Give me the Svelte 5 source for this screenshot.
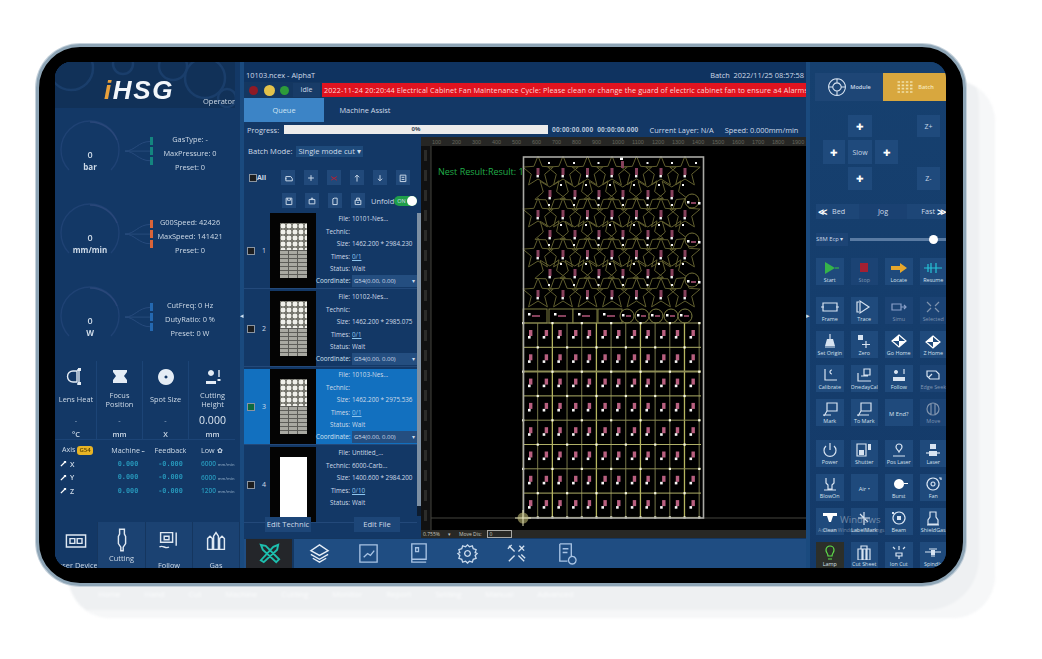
<script>
  const gauges = [
    { v: '0', u: 'bar', c: '#14857f', lines: ['GasType: -', 'MaxPressure: 0', 'Preset: 0'] },
    { v: '0', u: 'mm/min', c: '#d8643a', lines: ['G00Speed: 42426', 'MaxSpeed: 141421', 'Preset: 0'] },
    { v: '0', u: 'W', c: '#2468b0', lines: ['CutFreq: 0 Hz', 'DutyRatio: 0 %', 'Preset: 0 W'] }
  ];
  const sensors = [
    { l: ['Lens Heat'], v: '-', u: '°C', i: 'M11 4H7a5.500 5.500 0 0 0 0 11h4zM13 2v15M11 3h4M11 17h4', f: 'M12 1h3v3h-3zM12 15h3v3h-3z' },
    { l: ['Focus', 'Position'], v: '-', u: 'mm', i: '', f: 'M3 3h14v2l-3 4 3 4v3H3v-3l3-4-3-4z' },
    { l: ['Spot Size'], v: '-', u: 'X', i: '', f: 'M10 2a8 8 0 1 0 .01 0zM10 8.500a1.500 1.500 0 1 1-.01 0z' },
    { l: ['Cutting', 'Height'], v: '0.000', u: 'mm', i: 'M16 3v7', f: 'M8 3a3 3 0 1 1-.01 0zM14.500 12h3v2h-3zM3 14h10v3H3z' }
  ];
  const axes = [
    { a: 'X', m: '0.000', f: '-0.000', l: '6000' },
    { a: 'Y', m: '0.000', f: '-0.000', l: '6000' },
    { a: 'Z', m: '0.000', f: '-0.000', l: '1200' }
  ];
  const tiles = [
    { l: 'Laser Device', cls: 'left', d: 'M2 5h16v10H2zM5 8h4v4H5zM11 8h4v4h-4z' },
    { l: 'Cutting', cls: 'two', d: 'M8 1h4v4l1 2v6l-2 3v3H9v-3l-2-3V7l1-2z' },
    { l: 'Follow', cls: '', d: 'M3 3h10v8H3zM6 6h4v3H6zM16 3v11M2 15c3-2 5 2 8 0' },
    { l: 'Gas', cls: '', d: 'M3 8l2-2 2 2v9H3zM8 6l2-3 2 3v11H8zM13 8l2-2 2 2v9h-4z' }
  ];
  const tools1 = ['M4 5h7l2 3v3H4zM3 8h2', 'M7 3v8M3 7h8', 'M3 5l8 5M11 5l-8 5', 'M7 12V3M4 6l3-3 3 3', 'M7 3v7M4 8l3 3 3-3', 'M3 3h8v9H3zM5 6h4M5 9h4'];
  const tools2 = ['M3 3h8v9H3zM5 3v3h4V3', 'M3 5h8v6H3zM6 5V3h2v2', 'M4 4l2-1h4v9H4z', 'M3 6h8v6H3zM5 6V3h4v3M6 9h2'];
  const queue = [
    { n: 1, f: '10101-Nes...', t: '', s: '1462.200 * 2984.230', m: '0/1', st: 'Wait', coord: true, on: false },
    { n: 2, f: '10102-Nes...', t: '', s: '1462.200 * 2985.075', m: '0/1', st: 'Wait', coord: true, on: false },
    { n: 3, f: '10103-Nes...', t: '', s: '1462.200 * 2975.536', m: '0/1', st: 'Wait', coord: true, on: true },
    { n: 4, f: 'Untitled_...', t: '6000-Carb...', s: '1400.600 * 2984.200', m: '0/10', st: 'Wait', coord: false, on: false, blank: true }
  ];

  const starPts = (cx, cy, R, r, rot = 0) => {
    const p = [];
    for (let i = 0; i < 10; i++) {
      const a = -Math.PI / 2 + rot + (i * Math.PI) / 5;
      const q = i % 2 ? r : R;
      p.push(`${(cx + q * Math.cos(a)).toFixed(1)},${(cy + q * Math.sin(a)).toFixed(1)}`);
    }
    return p.join(' ');
  };
  const xA = [538, 563, 587.5, 612, 636.5, 661, 685];
  const xB = [550, 575, 599, 623, 648, 672];
  const starRows = [
    { y: 172, xs: xA, rot: 0 }, { y: 194, xs: xB, rot: 0.6 },
    { y: 214, xs: xA, rot: 0 }, { y: 234, xs: xB, rot: 0.6 },
    { y: 254, xs: xA, rot: 0 }, { y: 273, xs: xB, rot: 0.6 },
    { y: 294, xs: xA, rot: 0 }
  ];
  const gridX = Array.from({ length: 13 }, (_, i) => 523 + i * 14.68);
  const gridY = Array.from({ length: 9 }, (_, i) => 323 + i * 24.3);
  const rulerX = Array.from({ length: 19 }, (_, i) => ({ x: 432 + i * 20, t: String((i + 1) * 100) }));
  const rulerY = Array.from({ length: 19 }, (_, i) => 150 + i * 20);

  const S = '#d7e3f1';
  const grp1 = [
    [
      { l: 'Start', d: 'M15 8h4', f: 'M5 2l10 6-10 6z', c: '#35b34a' },
      { l: 'Stop', f: 'M6 3h8v9H6z', c: '#a32033', dim: true },
      { l: 'Locate', f: 'M2 6h9V3l7 5-7 5v-3H2z', c: '#e6a72c' },
      { l: 'Resume', d: 'M1 8h18M5 4v8M8 3v10M13 3v10', c: '#26c3d8' }
    ],
    [
      { l: 'Frame', d: 'M3 4h14v8H3zM1 8h3M16 8h3', c: S },
      { l: 'Trace', d: 'M6 2v12l9-6zM5 3H3v10h2', c: S },
      { l: 'Simu', d: 'M3 5h9v6H3zM12 8h5M15 6l2 2-2 2', c: '#8aa0c9', dim: true },
      { l: 'Selected', d: 'M4 3l4 4M16 3l-4 4M4 13l4-4M16 13l-4-4', c: '#7f93ad', dim: true }
    ]
  ];
  const grp2 = [
    [
      { l: 'Set Origin', d: 'M10 1v6M5 14h10', f: 'M7 6h6l2 7H5z', c: S },
      { l: 'Zero', d: 'M12 8v7M8 11.500h8', f: 'M4 2h5v5H4z', c: S },
      { l: 'Go Home', d: 'M10 2l7 6-7 6-7-6z', f: 'M10 2v6H3zM10 14V8h7z', c: '#fff' },
      { l: 'Z Home', d: 'M10 3l7 6-7 6-7-6z', f: 'M10 3v6H3zM10 15V9h7z', c: '#fff' }
    ],
    [
      { l: 'Calibrate', d: 'M5 2v11h12M12 3a2 2 0 1 0 0 4', c: S },
      { l: 'OnedayCal', d: 'M4 6v8h13M10 2h6v6h-6zM7 9h7', c: S },
      { l: 'Follow', d: 'M15 2v5', f: 'M4 10h12v4H4zM7 3a2 2 0 1 1-.01 0z', c: S },
      { l: 'Edge Seek', d: 'M4 4h9l3 3v5H7l-3-3zM9 7l-3 3', c: S, dim: true }
    ],
    [
      { l: 'Mark', d: 'M7 2h10v8H7zM7 10l-3 5M3 14h8', c: S },
      { l: 'To Mark', d: 'M7 2h10v8H7zM7 10l-3 5M3 14h12', c: S },
      { l: '', t: 'M End?', c: S },
      { l: 'Move', d: 'M4 8a4 4 0 0 1 12 0 4 4 0 0 1-12 0M8 2v12M12 2v12', c: '#7f93ad', dim: true }
    ]
  ];
  const grp3 = [
    [
      { l: 'Power', d: 'M6 4a6 6 0 1 0 8 0M10 1v7', c: S },
      { l: 'Shutter', d: 'M3 2h9v12H3z', f: 'M5 8h5v5H5zM14 2h3v6h-3z', c: S },
      { l: 'Pos Laser', d: 'M7 5a3 3 0 1 1 6 0c0 2-2 3-3 5-1-2-3-3-3-5M4 14h12', c: S },
      { l: 'Laser', d: 'M3 11h14', f: 'M7 2h6v5H7zM6 9h8v5H6z', c: S }
    ],
    [
      { l: 'BlowOn', d: 'M6 2v5l2 2v4h4V9l2-2V2M4 14h12', c: S },
      { l: '', t: 'Air •', c: S },
      { l: 'Burst', f: 'M10 3a5 5 0 1 0 .01 0zM15 7h4v1h-4z', c: '#fff' },
      { l: 'Fan', d: 'M10 2a6 6 0 1 0 .01 0zM10 6a2 2 0 1 0 .01 0zM16 2h2v2', c: S }
    ],
    [
      { l: 'Clean', f: 'M3 3h14v3H3zM7 6h6l-2 6H9z', c: '#fff' },
      { l: 'LabelMark', d: 'M10 2v13M4 8h12M6 4l8 8', c: S },
      { l: 'Beam', d: 'M10 2a6 6 0 1 0 .01 0z', f: 'M8 6h4v4H8zM3 2h2v2H3z', c: S },
      { l: 'ShieldGas', d: 'M7 2h6v5l2 3v4H5v-4l2-3zM4 15h12', c: S }
    ],
    [
      { l: 'Lamp', d: 'M6 6a4 4 0 1 1 8 0c0 3-2 3-2 6H8c0-3-2-3-2-6M8 15h4', c: '#5fe04a', lit: true },
      { l: 'Cut Sheet', d: 'M4 5h4v11H4zM9 5h3v11H9zM13 5h3v11h-3zM7 2h6v3H7z', c: S },
      { l: 'Ion Cut', d: 'M10 2v4M7 9h6v3H7zM10 12v3M4 3l2 2M16 3l-2 2', c: S },
      { l: 'Spindle', d: 'M2 8h16M6 5h8M8 12h4', f: 'M8 6h4v5H8z', c: S }
    ]
  ];
  const navIcons = [
    { d: 'M3 3l5 1 14 14-3 3L5 8zM21 3l-1 5L6 21l-3-2 13-14z', c: '#1dbfae' },
    { d: 'M12 3l9 6-9 5-9-5zM3 13l9 5 9-5M5 17l7 4 7-4', c: '#e6eef7' },
    { d: 'M3 3h18v18H3zM7 16l4-4 3 2 4-5', c: '#a9c4e4' },
    { d: 'M5 2h15v16H5zM5 18v3h15M9 6h3v4H9z', c: '#a9c4e4' },
    { d: 'M12 3l2 2 3-1 1 3 3 1-1 3 2 1-2 2 1 3-3 1-1 3-3-1-2 2-2-2-3 1-1-3-3-1 1-3-2-2 2-1-1-3 3-1 1-3 3 1zM12 9a3 3 0 1 0 .01 0z', c: '#c8d9ec' },
    { d: 'M4 4l6 6M7 3L3 7M14 10l6-6M20 9l-5-5M10 14l-6 6M14 14l6 6M17 13l4 4', c: '#d4e1ef' },
    { d: 'M5 2h12v13M5 2v18h8M8 7h6M8 11h5M18 15a4 4 0 1 0 .01 0z', c: '#a9c4e4' }
  ];
  const ghost = ['Home', 'Hand', 'Cut', 'Machine', 'Cutting', 'Monitor', 'Report', 'Setting', 'Manual', 'Advanced'];
</script>

{#snippet tool(b)}
  <div class="tool" class:lit={b.lit} class:dim={b.dim}>
    {#if b.t}
      <span class="tool-text">{b.t}</span>
    {:else}
      <svg viewBox="0 0 20 16" width="20" height="16" style="color:{b.c}">
        {#if b.f}<path d={b.f} fill="currentColor" />{/if}
        {#if b.d}<path d={b.d} fill="none" stroke="currentColor" stroke-width="1.2" />{/if}
      </svg>
      <span class="tool-label">{b.l}</span>
    {/if}
  </div>
{/snippet}

<div class="page">
  <div class="ghost">
    <div class="ghost-labels">
      {#each ghost as g}<span>{g}</span>{/each}
    </div>
  </div>

  <div class="tablet">
    <div class="screen">
      <!-- LEFT -->
      <aside class="left">
        <header class="brand">
          <svg class="cogs" viewBox="0 0 180 46" aria-hidden="true">
            <circle cx="16" cy="6" r="22" /><circle cx="68" cy="2" r="10" />
            <circle cx="150" cy="16" r="20" /><circle cx="118" cy="4" r="14" /><circle cx="172" cy="36" r="9" />
          </svg>
          <div class="logo"><span class="logo-i">i</span>HSG</div>
          <div class="operator">Operator</div>
        </header>

        {#each gauges as g}
          <section class="gauge-row">
            <div class="dial">
              <svg class="arc" viewBox="0 0 70 70" aria-hidden="true">
                <path d="M14 56a29 29 0 1 1 42 0" />
                <path class="arc-b" d="M35 8a29 29 0 0 1 27 18" />
              </svg>
              <div class="dial-v">{g.v}</div>
              <div class="dial-u">{g.u}</div>
            </div>
            <svg class="conn" viewBox="0 0 26 83" aria-hidden="true">
              <path d="M0 39c10 0 14-10 26-10M0 39h26M0 39c10 0 14 10 26 10" />
            </svg>
            <div class="ticks">
              {#each [0, 1, 2] as _}<i style="background:{g.c}"></i>{/each}
            </div>
            <div class="info">
              {#each g.lines as l}<div>{l}</div>{/each}
            </div>
          </section>
        {/each}

        <section class="sensors">
          {#each sensors as s}
            <div class="sensor">
              <svg viewBox="0 0 20 20" width="20" height="20">
                {#if s.f}<path d={s.f} fill="#e4ecf5" fill-rule="evenodd" />{/if}
                {#if s.i}<path d={s.i} fill="none" stroke="#e4ecf5" stroke-width="1.4" />{/if}
              </svg>
              <div class="sensor-l">{#each s.l as l}<div>{l}</div>{/each}</div>
              <div class="sensor-v" class:big={s.v !== '-'}>{s.v}</div>
              <div class="sensor-u">{s.u}</div>
            </div>
          {/each}
        </section>

        <section class="axes">
          <div class="axis-row head">
            <div class="c-a">Axis <b class="g54">G54</b></div>
            <div class="c-m">Machine <small>▪▪</small></div>
            <div class="c-f">Feedback</div>
            <div class="c-l">Low ✿</div>
          </div>
          {#each axes as a}
            <div class="axis-row">
              <div class="c-a ax"><svg viewBox="0 0 8 8" width="7" height="7"><path d="M1 7l5-5" stroke="#fff" stroke-width="1.5" /><path d="M4 1h3v3z" fill="#fff" /></svg> {a.a}</div>
              <div class="c-m cy">{a.m}</div>
              <div class="c-f cy">{a.f}</div>
              <div class="c-l cy2">{a.l} <small>mm/min</small></div>
            </div>
          {/each}
        </section>

        <section class="tiles">
          {#each tiles as t}
            <div class="tile {t.cls}">
              <svg viewBox="0 0 20 20" width="24" height="24"><path d={t.d} fill="none" stroke="#dfe8f2" stroke-width="1.2" /></svg>
              <span>{t.l}</span>
            </div>
          {/each}
        </section>
      </aside>

      <div class="gutter"><span>◂</span></div>

      <!-- MIDDLE -->
      <main class="mid">
        <div class="titlebar">
          <span>10103.ncex - AlphaT</span>
          <span>Batch&nbsp; 2022/11/25 08:57:58</span>
        </div>
        <div class="statusbar">
          <i class="dot red"></i><i class="dot yellow"></i><i class="dot green"></i>
          <span class="idle">Idle</span>
          <div class="alarm">
            <span>2022-11-24 20:20:44  Electrical Cabinet Fan Maintenance Cycle: Please clean or change the guard of electric cabinet fan to ensure a</span>
            <span>4 Alarms</span>
          </div>
        </div>
        <div class="tabs">
          <div class="tab active">Queue</div>
          <div class="tab">Machine Assist</div>
        </div>
        <div class="progress">
          <span class="p-label">Progress:</span>
          <div class="p-bar">0%</div>
          <span class="p-times">00:00:00.000&nbsp; 00:00:00.000</span>
          <span class="p-layer">Current Layer: N/A</span>
          <span class="p-speed">Speed: 0.000mm/min</span>
        </div>

        <div class="work">
          <div class="queue">
            <div class="batch"><span>Batch Mode:</span><span class="batch-sel">Single mode cut ▾</span></div>
            <div class="toolbar t1">
              <label class="all"><i class="chk"></i>All</label>
              {#each tools1 as d, i}
                <div class="tbtn" class:redb={i === 2}>
                  <svg viewBox="0 0 14 14" width="10" height="10"><path {d} fill="none" stroke={i === 2 ? '#b32136' : '#c6d5e6'} stroke-width="1.4" /></svg>
                </div>
              {/each}
            </div>
            <div class="toolbar t2">
              {#each tools2 as d}
                <div class="tbtn">
                  <svg viewBox="0 0 14 14" width="10" height="10"><path {d} fill="none" stroke="#c6d5e6" stroke-width="1.4" /></svg>
                </div>
              {/each}
              <span class="unfold">Unfold</span>
              <div class="toggle"><span>ON</span><i></i></div>
            </div>

            <div class="list">
              <div class="rows">
                {#each queue as q}
                  <div class="row" class:on={q.on}>
                    <div class="sel">
                      <i class="chk" class:chk-on={q.on}></i><span>{q.n}</span>
                    </div>
                    <div class="thumb" class:thumb-blank={q.blank}><div class="drawing"></div></div>
                    <div class="fields">
                      <div><span>File:</span><b>{q.f}</b></div>
                      <div><span>Technic:</span><b>{q.t}</b></div>
                      <div><span>Size:</span><b>{q.s}</b></div>
                      <div><span>Times:</span><b><u>{q.m}</u></b></div>
                      <div><span>Status:</span><b>{q.st}</b></div>
                      {#if q.coord}
                        <div class="coord"><span>Coordinate:</span><b>G54(0.00, 0.00) <em>▾</em></b></div>
                      {/if}
                    </div>
                  </div>
                {/each}
              </div>
              <div class="scroll"><i></i></div>
            </div>

            <div class="edits">
              <div class="edit">Edit Technic</div>
              <div class="edit">Edit File</div>
            </div>
          </div>

          <div class="canvas">
            <svg class="cad" viewBox="421 137 385 393" preserveAspectRatio="none" aria-hidden="true">
              <rect x="421" y="137" width="385" height="9" fill="#262624" />
              <rect x="421" y="146" width="10" height="384" fill="#111" />
              {#each rulerX as r}<text x={r.x} y="144" class="tick">{r.t}</text>{/each}
              {#each rulerY as y}<rect x="424" {y} width="3" height="11" fill="#2c2c2a" />{/each}
              <path d="M431 146v384M431 518h375" stroke="#44443f" stroke-width="1" fill="none" />

              {#each starRows as r}
                {#each r.xs as x}
                  <polygon points={starPts(x, r.y, 16, 7, r.rot)} fill="none" stroke="#5f5d2e" stroke-width="1" />
                  <rect x={x - 1.5} y={r.y - 4} width="3" height="7" fill="#86415c" />
                  <rect x={x - 1.5} y={r.y + 3} width="2.4" height="2.4" fill="#f4f4f4" />
                  <rect x={x + 10} y={r.y - 10} width="2" height="2" fill="#f4f4f4" />
                {/each}
              {/each}
              <rect x="620" y="157" width="3" height="3" fill="#fff" /><rect x="621" y="161" width="3" height="7" fill="#86415c" />
              {#each [201, 240, 280] as y}
                <circle cx="692" cy={y} r="7" fill="#000" stroke="#716f37" />
                <rect x="687" {y} width="2.5" height="2.5" fill="#fff" /><rect x="691" y={y + 1} width="5" height="2" fill="#86415c" />
                <rect x="698" y={y + 1} width="2.5" height="2.5" fill="#fff" />
              {/each}

              {#each [523, 549, 573, 598] as x}
                <rect {x} y="309" width="24" height="14" fill="#000" stroke="#7c7c40" />
                <rect x={x + 5} y="313" width="2.5" height="2.5" fill="#fff" /><rect x={x + 9} y="315" width="8" height="2" fill="#86415c" />
              {/each}
              {#each [627, 642, 656, 671, 685] as x}
                <circle cx={x} cy="316" r="7" fill="#000" stroke="#7c7c40" />
                <rect x={x - 5} y="314" width="2.5" height="2.5" fill="#fff" /><rect x={x - 1} y="315" width="5" height="2" fill="#86415c" />
              {/each}

              {#each gridX as x, i}
                <path d="M{x} 323V518" stroke={i % 3 === 2 ? '#b4b460' : '#77774a'} stroke-width={i % 3 === 2 ? 1.3 : 1} />
              {/each}
              {#each gridY as y, i}
                <path d="M523 {y}H701" stroke={i % 2 ? '#b0b068' : '#8d8d56'} stroke-width={i === 2 ? 2 : 1} />
              {/each}
              {#each gridY.slice(0, -1) as y}
                {#each gridX.slice(0, -1) as x, i}
                  <rect x={x + 6 + (i % 2)} y={y + 7} width="3.4" height="6" fill="#b85f7f" />
                  <rect x={x + 5} y={y + 13} width="2.6" height="2.6" fill="#f7f7f7" />
                {/each}
              {/each}
              {#each gridY as y, j}
                {#each gridX as x, i}
                  {#if (i + j) % 2 === 0 || j === 8}
                    <rect x={x - 1} y={y - 1} width="2.2" height="2.2" fill="#fbfbe6" />
                  {/if}
                {/each}
              {/each}

              <rect x="523.5" y="157" width="180" height="361" fill="none" stroke="#a8a8a4" stroke-width="1.6" />
              <circle cx="523" cy="518" r="5.5" fill="#8d8a56" opacity=".8" />
              <path d="M523 510v16M515 518h16" stroke="#e4e2b8" stroke-width="1" />
            </svg>
            <div class="nest">Nest Result:Result: 1</div>
            <div class="strip">
              <span>0.755%</span><span class="dd">▾</span><span>Move Dis:</span><span class="mv">0</span>
            </div>
          </div>
        </div>

        <nav class="nav">
          {#each navIcons as n, i}
            <div class="nav-item" class:cur={i === 0}>
              <svg viewBox="0 0 24 24" width="23" height="23"><path d={n.d} fill="none" stroke={n.c} stroke-width={i === 0 ? 2 : 1.4} /></svg>
            </div>
          {/each}
        </nav>
      </main>

      <div class="gutter"><span>▸</span></div>

      <!-- RIGHT -->
      <aside class="right">
        <div class="modes">
          <div class="mode">
            <svg viewBox="0 0 24 24" width="20" height="20"><path d="M12 2a10 10 0 1 0 .01 0zM12 7a5 5 0 1 0 .01 0zM12 2v5M2 12h5M17 12h5M12 17v5" fill="none" stroke="#d7e3f1" stroke-width="1.3" /></svg>
            <span>Module</span>
          </div>
          <div class="mode gold">
            <svg viewBox="0 0 24 16" width="20" height="14"><path d="M3 2h18M3 6h18M3 10h18M3 14h18" stroke="#efe0a6" stroke-width="2" stroke-dasharray="3 2" /></svg>
            <span>Batch</span>
          </div>
        </div>

        <div class="pad">
          <div class="pb up">✚</div>
          <div class="pb zp">Z+</div>
          <div class="pb lf">✚</div>
          <div class="pb ct">Slow</div>
          <div class="pb rt">✚</div>
          <div class="pb dn">✚</div>
          <div class="pb zm">Z-</div>
        </div>

        <div class="jog">
          <div class="jog-s"><b>≪</b><span>Bed</span></div>
          <div class="jog-m">Jog</div>
          <div class="jog-s end"><span>Fast</span><b>≫</b></div>
        </div>

        <div class="speed">
          <span class="sel-s">S8M Ecp ▾</span>
          <div class="track"><i></i></div>
        </div>

        <div class="toolgrid first">
          {#each grp1 as r}{#each r as b}{@render tool(b)}{/each}{/each}
        </div>
        <div class="toolgrid second">
          {#each grp2 as r}{#each r as b}{@render tool(b)}{/each}{/each}
        </div>
        <div class="toolgrid third">
          {#each grp3 as r}{#each r as b}{@render tool(b)}{/each}{/each}
        </div>
        <div class="winmark"><div>Windows</div><small>Activate Windows in Settings</small></div>
      </aside>
    </div>
  </div>
</div>

<style>
  :global(body) { margin: 0; background: #fff; }
  .page {
    position: relative;
    width: 1042px;
    height: 659px;
    box-sizing: border-box;
    padding: 44px 0 0 36px;
    overflow: hidden;
    background: #fff;
    font-family: "Open Sans", "Liberation Sans", sans-serif;
    color: #cfdbe8;
  }
  .ghost {
    position: absolute;
    left: 68px;
    top: 80px;
    width: 927px;
    height: 538px;
    box-sizing: border-box;
    border-radius: 42px;
    background: #eef0f2;
    box-shadow: inset -26px -18px 0 -10px #f6f7f8;
    filter: blur(1px);
  }
  .ghost-labels {
    position: absolute;
    left: 30px;
    right: 0;
    top: 508px;
    display: flex;
    gap: 24px;
    font-size: 8px;
    color: #fbfcfd;
  }
  .tablet {
    position: relative;
    width: 930px;
    height: 542px;
    box-sizing: border-box;
    padding: 15px 16px;
    border: 3px solid #8ea5b6;
    border-radius: 44px;
    background: #000;
    box-shadow: 0 0 0 1px #c6d2dc;
  }
  .screen {
    width: 891px;
    height: 506px;
    display: grid;
    grid-template-columns: 185px 4px 562px 4px 136px;
    overflow: hidden;
    border-radius: 16px;
    background: #123563;
    filter: blur(.6px);
  }
  .gutter {
    background: #1a4a7e;
    display: flex;
    align-items: center;
    justify-content: center;
    font-size: 7px;
    color: #cfe0f0;
    overflow: hidden;
  }

  /* left */
  .left {
    display: flex;
    flex-direction: column;
    background: #133866;
    min-width: 0;
    overflow: hidden;
  }
  .brand {
    position: relative;
    height: 46px;
    width: 180px;
    flex: none;
    background: #113158;
  }
  .cogs { position: absolute; inset: 0; width: 100%; height: 100%; }
  .cogs circle { fill: none; stroke: #1a3e6b; stroke-width: 2.5; }
  .logo {
    position: absolute;
    left: 49px;
    top: 14px;
    font: italic 900 26px/28px "Liberation Sans", sans-serif;
    letter-spacing: 1.6px;
    color: #f3f7fb;
  }
  .logo-i { color: #e9a13c; }
  .operator {
    position: absolute;
    left: 148px;
    top: 34px;
    font-size: 7.5px;
    white-space: nowrap;
  }
  .gauge-row {
    height: 83px;
    flex: none;
    display: grid;
    grid-template-columns: 70px 25px 4px 72px;
  }
  .gauge-row:first-of-type { margin-top: 4px; }
  .dial { position: relative; text-align: center; font-weight: 600; }
  .arc { position: absolute; left: 0; top: 2px; width: 70px; height: 70px; }
  .arc path { fill: none; stroke: #1f4274; stroke-width: 1.4; }
  .arc .arc-b { stroke: #2a4779; }
  .dial-v { position: relative; padding-top: 36px; font-size: 9px; line-height: 13px; }
  .dial-u { position: relative; font-size: 8px; line-height: 12px; font-weight: 700; }
  .conn { width: 25px; height: 83px; }
  .conn path { fill: none; stroke: #284b7d; stroke-width: 1; }
  .ticks { padding-top: 25px; display: flex; flex-direction: column; gap: 2px; }
  .ticks i { display: block; height: 8px; width: 3px; }
  .info { padding-top: 20px; font-size: 7.4px; line-height: 14px; text-align: center; white-space: nowrap; }
  .sensors {
    display: grid;
    grid-template-columns: 41px 46px 46px 47px;
    width: 180px;
    padding-left: 1px;
    height: 79px;
    flex: none;
    border-bottom: 1px solid #1c4476;
    box-sizing: border-box;
  }
  .sensor {
    display: flex;
    flex-direction: column;
    align-items: center;
    border-right: 1px solid #1c4476;
    padding-top: 6px;
    font-size: 7.4px;
    line-height: 9.5px;
    text-align: center;
    white-space: nowrap;
  }
  .sensor:last-child { border-right: 0; }
  .sensor svg { flex: none; }
  .sensor-l { height: 22px; margin-top: 2px; display: flex; flex-direction: column; justify-content: center; }
  .sensor-v { height: 18px; line-height: 18px; color: #9fb4cc; }
  .sensor-v.big { font-size: 10.5px; color: #dbe5f0; }
  .sensor-u { margin-top: 1px; font-weight: 600; }
  .axes { height: 82px; flex: none; padding-top: 2px; box-sizing: border-box; }
  .axis-row {
    display: grid;
    grid-template-columns: 47px 44px 41px 44px;
    height: 13.5px;
    align-items: center;
    padding-left: 4px;
    font-size: 7.2px;
    white-space: nowrap;
  }
  .axis-row.head { height: 15px; }
  .axis-row small { font-size: 4px; }
  .c-a { padding-left: 3px; }
  .c-m, .c-f { text-align: center; }
  .c-l { padding-left: 10px; }
  .ax { font-weight: 600; padding-left: 1px; display: flex; align-items: center; gap: 3px; }
  .g54 { display: inline-block; background: #e8b425; color: #5c4400; border-radius: 3px; padding: 0 2px; font-size: 6px; line-height: 9px; font-weight: 600; }
  .cy { color: #2796ba; font-family: "DejaVu Sans Mono", monospace; font-size: 6.8px; font-weight: 700; }
  .cy2 { color: #2796ba; font-size: 6.6px; font-weight: 600; }
  .cy2 small { color: #7f9cb9; }
  .tiles {
    flex: 1;
    min-height: 0;
    display: grid;
    grid-template-columns: 43px 48px 47px 47px;
    background: #1b4272;
    overflow: hidden;
  }
  .tile {
    display: flex;
    flex-direction: column;
    align-items: center;
    padding-top: 7px;
    gap: 8px;
    font-size: 7.4px;
    line-height: 9px;
    white-space: nowrap;
    border-right: 1px solid #15365f;
  }
  .tile.two { gap: 2px; padding-top: 6px; }
  .tile.left { direction: rtl; overflow: hidden; }

  /* middle */
  .mid { display: flex; flex-direction: column; min-width: 0; background: #133866; }
  .titlebar {
    height: 20px;
    padding: 7px 2px 0 2px;
    box-sizing: border-box;
    display: flex;
    justify-content: space-between;
    font-size: 7.4px;
    line-height: 12px;
    background: #0f3360;
  }
  .statusbar {
    height: 16px;
    display: flex;
    align-items: center;
    background: #143761;
    flex: none;
  }
  .dot { display: block; width: 9px; height: 9px; border-radius: 50%; flex: none; }
  .dot.red { margin-left: 5px; background: #8f1a25; }
  .dot.yellow { margin-left: 6px; width: 11px; height: 11px; background: #e3c24b; }
  .dot.green { margin-left: 5px; background: #2d9b3a; }
  .idle {
    margin-left: 4px;
    width: 27px;
    text-align: center;
    font-size: 7px;
    line-height: 14px;
    background: #183c68;
  }
  .alarm {
    flex: 1;
    min-width: 0;
    margin-left: 2px;
    height: 14px;
    display: flex;
    justify-content: space-between;
    align-items: center;
    padding: 0 2px;
    box-sizing: border-box;
    background: #e0131f;
    font-size: 7.3px;
    color: #ffd6d5;
    white-space: nowrap;
    overflow: hidden;
    letter-spacing: .1px;
  }
  .tabs { height: 24px; display: flex; font-size: 7.4px; line-height: 24px; text-align: center; flex: none; }
  .tab { width: 80px; }
  .tab.active { background: #3c84c6; color: #cfe4f5; }
  .tab + .tab { width: 82px; }
  .progress {
    height: 15px;
    flex: none;
    display: flex;
    align-items: center;
    font-size: 7.4px;
    white-space: nowrap;
  }
  .p-label { margin-left: 3px; width: 37px; }
  .p-bar {
    width: 264px;
    height: 9px;
    line-height: 9px;
    background: #ececec;
    color: #3a4a58;
    text-align: center;
    font-size: 6px;
    font-weight: 700;
  }
  .p-times { margin-left: 4px; font-weight: 700; color: #b8c6d8; font-size: 6.4px; letter-spacing: .25px; }
  .p-layer { margin-left: 11px; }
  .p-speed { margin-left: 11px; }

  .work { flex: 1; min-height: 0; display: grid; grid-template-columns: 177px 385px; }
  .queue { min-width: 0; display: flex; flex-direction: column; }
  .batch { height: 28px; flex: none; display: flex; align-items: center; padding: 0 0 0 4px; gap: 4px; font-size: 7.6px; }
  .batch-sel { background: #1e4a7b; padding: 0 2px; line-height: 11px; font-size: 7.6px; }
  .toolbar { display: flex; align-items: center; flex: none; height: 15px; }
  .toolbar.t1 { margin-top: 5px; padding-left: 5px; gap: 9px; }
  .toolbar.t2 { margin-top: 8px; padding-left: 38px; gap: 9px; }
  .all { display: flex; align-items: center; width: 23px; font-size: 7px; font-weight: 700; }
  .chk { display: block; width: 6px; height: 6px; background: #1c1d1e; border: 1px solid #8a94a0; flex: none; }
  .chk-on { background: #0e6a3f; }
  .tbtn {
    width: 14px;
    height: 15px;
    background: #21497a;
    display: flex;
    align-items: center;
    justify-content: center;
    flex: none;
  }
  .unfold { font-size: 7.4px; margin-left: -3px; }
  .toggle {
    position: relative;
    width: 23px;
    height: 10px;
    margin-left: -9px;
    border-radius: 5px;
    background: #1f9e4a;
    font-size: 5.5px;
    line-height: 10px;
    padding-left: 3px;
    box-sizing: border-box;
  }
  .toggle i {
    position: absolute;
    right: 0;
    top: 0;
    width: 10px;
    height: 10px;
    border-radius: 50%;
    background: #fff;
  }
  .list { margin-top: 5px; height: 303px; flex: none; display: flex; }
  .rows { width: 173px; flex: none; }
  .row {
    height: 76px;
    margin-bottom: 2px;
    display: grid;
    grid-template-columns: 26px 46px 101px;
    border-bottom: 1px solid #23497a;
    box-sizing: border-box;
    overflow: hidden;
  }
  .row.on { background: #1270bf; }
  .sel { display: flex; align-items: center; gap: 7px; padding-left: 3px; font-size: 7px; }
  .thumb { background: #040404; display: flex; justify-content: center; padding-top: 10px; box-sizing: border-box; }
  .drawing {
    width: 27px;
    height: 55px;
    background:
      linear-gradient(90deg, transparent 0 8px, #5a5a56 8px 9px, transparent 9px 17px, #5a5a56 17px 18px, transparent 18px) 0 100% / 100% 28px no-repeat,
      repeating-linear-gradient(0deg, #a9a9a2 0 3px, #5d5d59 3px 4px) 0 100% / 100% 28px no-repeat,
      radial-gradient(circle at 3px 3px, #f0f0ea 0 2.4px, #77776f 2.6px) 0 0 / 6px 6px repeat-x,
      radial-gradient(circle at 3px 3px, #f0f0ea 0 2.4px, #77776f 2.6px) 0 0 / 6px 6px repeat,
      #999;
  }
  .thumb-blank { padding-top: 10px; }
  .thumb-blank .drawing { background: #fff; height: 60px; }
  .fields { font-size: 6.3px; line-height: 12.5px; white-space: nowrap; }
  .fields > div { display: grid; grid-template-columns: 34px 1fr; column-gap: 2px; height: 12.5px; }
  .fields span { text-align: right; }
  .fields b { font-weight: 500; overflow: hidden; }
  .fields u { color: #8fc7ef; }
  .coord { margin-top: -1px; }
  .coord span { color: #cfe0f0; }
  .coord b { background: #244e80; padding-left: 2px; position: relative; font-size: 6px; }
  .coord em { position: absolute; right: 2px; font-style: normal; }
  .scroll { width: 4px; background: #0d1c2f; padding: 0 0 10px; box-sizing: border-box; flex: none; display: flex; }
  .scroll i { display: block; width: 100%; background: #7e90a3; }
  .edits {
    flex: 1;
    display: flex;
    gap: 43px;
    padding: 1px 0 0 21px;
    font-size: 7.6px;
  }
  .edit {
    width: 46px;
    height: 15px;
    line-height: 15px;
    text-align: center;
    background: #1d4678;
    white-space: nowrap;
  }
  .canvas { position: relative; background: #000; min-width: 0; min-height: 0; display: flex; flex-direction: column; }
  .cad { flex: 1; min-height: 0; width: 100%; display: block; }
  .tick { font-size: 5.5px; fill: #66665f; font-family: "Liberation Sans", sans-serif; }
  .nest {
    position: absolute;
    left: 17px;
    top: 29px;
    font-size: 9px;
    line-height: 12px;
    color: #20ad49;
    white-space: nowrap;
  }
  .strip {
    height: 8px;
    flex: none;
    display: flex;
    align-items: center;
    gap: 8px;
    padding-left: 2px;
    background: #282825;
    font-size: 5px;
    color: #c4c4be;
    white-space: nowrap;
  }
  .mv { width: 25px; height: 8px; margin-left: -3px; border: 1px solid #a8a8a4; box-sizing: border-box; line-height: 6px; padding-left: 2px; }
  .nav {
    height: 30px;
    flex: none;
    display: flex;
    background: #1f4d82;
    padding-left: 2px;
    border-top: 1px solid #143761;
    box-sizing: border-box;
  }
  .nav-item {
    width: 49.3px;
    display: flex;
    align-items: center;
    justify-content: center;
  }
  .nav-item.cur { background: #24262a; width: 48px; box-sizing: content-box; border-right: 2px solid #143761; width: 46px; margin-right: 1px; }

  /* right */
  .right {
    position: relative;
    padding: 11px 0 0 5px;
    min-width: 0;
    overflow: hidden;
    background: linear-gradient(180deg, #16406f, #143a69);
    color: #cfdcea;
  }
  .modes { display: grid; grid-template-columns: 68px 63px; height: 28px; }
  .mode { display: flex; align-items: center; justify-content: center; gap: 3px; background: #1e4676; font-size: 5.6px; font-weight: 600; }
  .gold { background: #d8a73e; color: #f7e9bb; }
  .pad {
    margin: 14px 0 0 8px;
    display: grid;
    grid-template-columns: 22px 24px 23px 13px 23px;
    grid-template-rows: 22px 24px 23px;
    gap: 3px;
    font-size: 7px;
  }
  .pb {
    display: flex;
    align-items: center;
    justify-content: center;
    background: #1f4a7c;
    color: #fff;
    font-size: 9px;
  }
  .up { grid-area: 1 / 2; }
  .zp { grid-area: 1 / 5; font-size: 7px; color: #c6d6e7; }
  .lf { grid-area: 2 / 1; }
  .ct { grid-area: 2 / 2; font-size: 7px; color: #c6d6e7; }
  .rt { grid-area: 2 / 3; }
  .dn { grid-area: 3 / 2; }
  .zm { grid-area: 3 / 5; font-size: 7px; color: #c6d6e7; }
  .jog {
    margin: 14px 0 0 1px;
    height: 15px;
    display: grid;
    grid-template-columns: 43px 48px 39px;
    font-size: 7.2px;
    line-height: 15px;
  }
  .jog-s { background: #1d4677; display: flex; gap: 5px; padding-left: 2px; overflow: hidden; white-space: nowrap; }
  .jog-s b { color: #fff; font-size: 9px; }
  .jog-s.end { justify-content: flex-end; padding: 0; gap: 2px; }
  .jog-m { background: #1a4172; text-align: center; }
  .speed { margin: 13px 0 0 1px; height: 14px; display: flex; align-items: center; gap: 2px; }
  .sel-s { width: 32px; flex: none; background: #1c4475; font-size: 5.8px; line-height: 13px; white-space: nowrap; overflow: hidden; }
  .track { position: relative; flex: 1; height: 3px; background: #5a7ba3; }
  .track i { position: absolute; right: 8px; top: -3px; width: 9px; height: 9px; border-radius: 50%; background: #fff; }
  .toolgrid {
    display: grid;
    grid-template-columns: repeat(4, 27.5px);
    column-gap: 7px;
    margin-left: 1px;
  }
  .toolgrid.first { margin-top: 12px; grid-auto-rows: 27px; row-gap: 12px; }
  .toolgrid.second { margin-top: 7px; grid-auto-rows: 27px; row-gap: 7px; }
  .toolgrid.third { margin-top: 14px; grid-auto-rows: 27px; row-gap: 7px; }
  .tool {
    background: #1f4a7c;
    display: flex;
    flex-direction: column;
    align-items: center;
    padding-top: 2px;
    box-sizing: border-box;
    white-space: nowrap;
    overflow: hidden;
  }
  .tool.lit { background: #2c2f2a; }
  .tool.dim { background: #1b4374; }
  .tool-label { font-size: 5.4px; line-height: 7px; font-weight: 500; margin-top: 1px; color: #d5e0ec; }
  .dim .tool-label { color: #7f95b2; }
  .tool-text { margin: auto; font-size: 5.8px; font-weight: 500; color: #d5e0ec; }
  .winmark {
    position: absolute;
    left: 8px;
    top: 452px;
    color: #a7b7c9;
    opacity: .6;
    font-size: 9.5px;
    line-height: 11px;
    white-space: nowrap;
    pointer-events: none;
  }
  .winmark div { padding-left: 22px; }
  .winmark small { font-size: 5px; display: block; }
</style>
